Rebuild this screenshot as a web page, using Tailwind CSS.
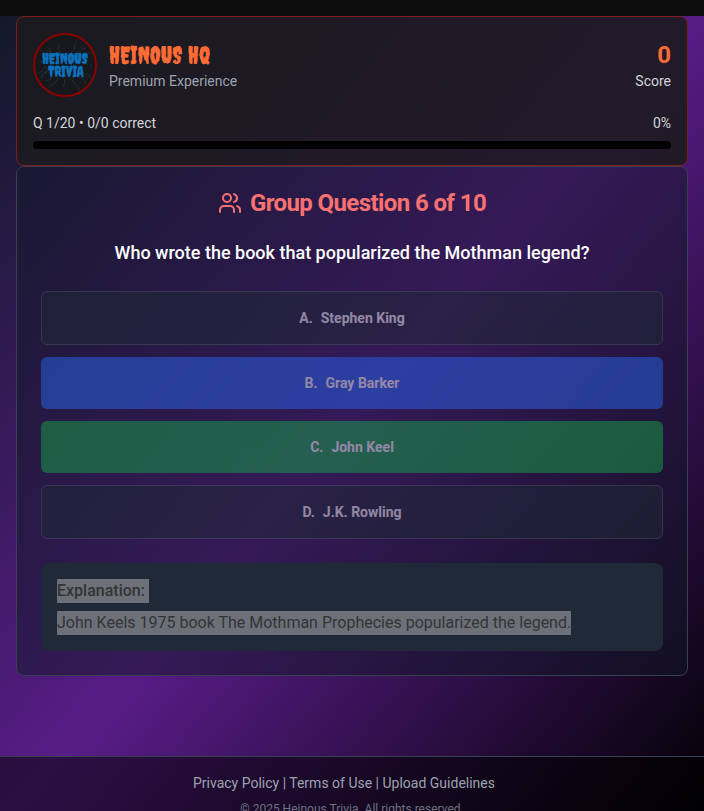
<!DOCTYPE html>
<html lang="en">
<head>
<meta charset="utf-8">
<meta name="viewport" content="width=device-width, initial-scale=1">
<title>Heinous Trivia</title>
<script src="https://cdn.jsdelivr.net/npm/@tailwindcss/browser@4"></script>
</head>
<body class="h-screen overflow-hidden bg-black font-[Roboto,sans-serif] text-white">
<div class="flex min-h-screen flex-col bg-linear-to-br/srgb from-[#111827] via-[#581c87] to-black">
  <div class="h-4 shrink-0 bg-[#0c0c0c]"></div>
  <main class="shrink-0 px-4 pb-20">
    <header class="rounded-lg border border-[#7f1d1d] bg-[#1c1b1f]/90 p-4">
      <div class="mb-4 flex items-center justify-between">
        <div class="flex items-center gap-3">
          <svg class="size-16" viewBox="0 0 64 64" role="img" aria-label="Heinous Trivia logo">
            <circle cx="32" cy="32" r="31" fill="#17181b" stroke="#8b0000" stroke-width="2"/>
            <g fill="none" stroke="#2b5562" stroke-width="0.6" opacity="0.6">
              <path d="M19 20l-2-4-3-2M19 20l-5-3M28 20l-3-4 1-5M38 20l4-4-1-4 3-3M44 20l5-4 4-1M54 21l4-2M9 29l-3-2M56 32l3 1"/>
              <path d="M12 33l-3 5-4 2M15 38l-5 3-2 4M20 44l-4 3-4 1M25 45l-3 5-6 4M31 45l1 5-2 4M38 45l3 5 4 3 1 4M46 44l5 3 2 4M51 40l5 2 3 4M12 33l2 4-2 4"/>
            </g>
            <g fill="#0c72bd" stroke="#0c72bd" stroke-width="0.3" font-family="Creepster, Roboto, sans-serif" text-anchor="middle">
              <text x="32" y="31" font-size="15">HEINOUS</text>
              <text x="33" y="44" font-size="15">TRIVIA</text>
            </g>
          </svg>
          <div>
            <h1 class="font-[Creepster,Roboto,sans-serif] text-2xl leading-8 font-normal text-[#ff6b35]">HEINOUS HQ</h1>
            <p class="text-sm text-[#9ca3af]">Premium Experience</p>
          </div>
        </div>
        <div class="text-right">
          <div class="text-2xl font-bold text-[#ff6b35]">0</div>
          <div class="text-sm text-[#d1d5db]">Score</div>
        </div>
      </div>
      <div class="mb-2 flex justify-between text-sm text-[#d1d5db]">
        <span>Q 1/20 • 0/0 correct</span>
        <span>0%</span>
      </div>
      <div class="h-2 rounded-full bg-black" role="progressbar" aria-label="Progress" aria-valuenow="0" aria-valuemin="0" aria-valuemax="100"></div>
    </header>

    <section class="flex flex-col gap-6 rounded-lg border border-[#374151] bg-[#111827]/50 p-6">
      <h2 class="flex items-center justify-center gap-2 text-2xl leading-6 font-bold tracking-tight text-[#f87171]">
        <svg class="size-6" viewBox="0 0 24 24" fill="none" stroke="currentColor" stroke-width="2" stroke-linecap="round" stroke-linejoin="round" aria-hidden="true">
          <path d="M16 21v-2a4 4 0 0 0-4-4H6a4 4 0 0 0-4 4v2"/>
          <circle cx="9" cy="7" r="4"/>
          <path d="M22 21v-2a4 4 0 0 0-3-3.87"/>
          <path d="M16 3.13a4 4 0 0 1 0 7.75"/>
        </svg>
        Group Question 6 of 10
      </h2>
      <p class="text-center text-lg font-medium">Who wrote the book that popularized the Mothman legend?</p>
      <div class="flex flex-col gap-3 text-sm font-bold text-[#f3f4f6]">
        <button type="button" disabled class="flex justify-center gap-2 rounded-md border border-[#4b5563] bg-[#1f2937] p-4 opacity-50"><span>A.</span><span>Stephen King</span></button>
        <button type="button" disabled class="flex justify-center gap-2 rounded-md bg-[#2563eb] p-4 opacity-50"><span>B.</span><span>Gray Barker</span></button>
        <button type="button" disabled class="flex justify-center gap-2 rounded-md bg-[#16a34a] p-4 opacity-50"><span>C.</span><span>John Keel</span></button>
        <button type="button" disabled class="flex justify-center gap-2 rounded-md border border-[#4b5563] bg-[#1f2937] p-4 opacity-50"><span>D.</span><span>J.K. Rowling</span></button>
      </div>
      <div class="flex flex-col items-start gap-2 rounded-lg bg-[#1f2937] p-4 text-base text-[#333436]">
        <h3 class="bg-[#6d7078] pr-1 font-medium">Explanation:</h3>
        <p class="bg-[#6d7078]">John Keels 1975 book The Mothman Prophecies popularized the legend.</p>
      </div>
    </section>
  </main>
  <footer class="flex-1 border-t border-[#374151] bg-black/50 p-4 text-center">
    <nav class="mb-2 pr-4 text-sm text-[#9ca3af]"><a href="#privacy">Privacy Policy</a> | <a href="#terms">Terms of Use</a> | <a href="#guidelines">Upload Guidelines</a></nav>
    <p class="text-xs text-[#6b7280]">© 2025 Heinous Trivia. All rights reserved.</p>
  </footer>
</div>
</body>
</html>
